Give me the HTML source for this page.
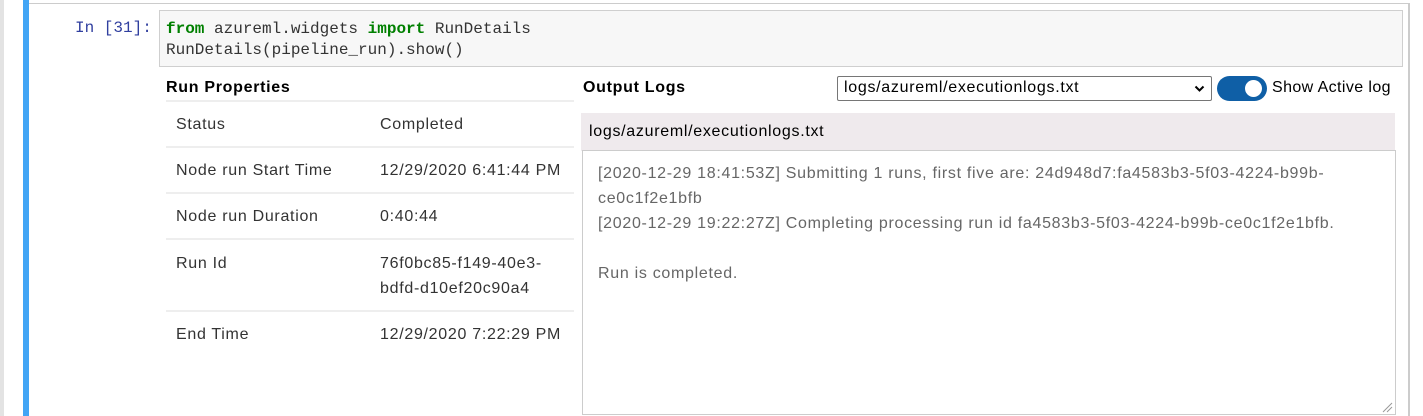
<!DOCTYPE html>
<html><head><style>
body{margin:0;width:1423px;height:416px;overflow:hidden;background:#fff;font-family:"Liberation Sans",Arial,sans-serif;position:relative;letter-spacing:0.7px}
.a{position:absolute;white-space:nowrap}
.mono{font-family:"Liberation Mono",monospace;font-size:16px;letter-spacing:0}
.lab{font-size:16px;color:#333}
.sep{position:absolute;left:166px;width:408px;height:2px;background:#eee}
.log{font-size:16px;color:#666}
</style></head><body>
<div class="a" style="left:0;top:0;width:4px;height:416px;background:#e3e3e3"></div>
<div class="a" style="left:23px;top:0;width:6px;height:416px;background:#42a5f5"></div>
<div class="a" style="left:29px;top:3px;width:1381px;height:413px;border-top:1px solid #ccc;border-right:2px solid #ccc;box-sizing:border-box"></div>
<div class="a mono" style="left:75px;top:19px;color:#303f9f">In [31]:</div>
<div class="a" style="left:159px;top:10px;width:1244px;height:57px;background:#f7f7f7;border:1px solid #cfcfcf;box-sizing:border-box"></div>
<div class="a mono" style="left:166px;top:19px;line-height:21px;color:#333"><span style="color:#008000;font-weight:bold">from</span> azureml.widgets <span style="color:#008000;font-weight:bold">import</span> RunDetails<br>RunDetails(pipeline_run).show()</div>

<div class="a" style="left:166px;top:79px;font-size:16px;font-weight:bold;color:#000">Run Properties</div>
<div class="sep" style="top:100px"></div>
<div class="a lab" style="left:176px;top:116px">Status</div><div class="a lab" style="left:380px;top:116px">Completed</div>
<div class="sep" style="top:146px"></div>
<div class="a lab" style="left:176px;top:162px">Node run Start Time</div><div class="a lab" style="left:380px;top:162px">12/29/2020 6:41:44 PM</div>
<div class="sep" style="top:192px"></div>
<div class="a lab" style="left:176px;top:208px">Node run Duration</div><div class="a lab" style="left:380px;top:208px">0:40:44</div>
<div class="sep" style="top:238px"></div>
<div class="a lab" style="left:176px;top:255px">Run Id</div><div class="a lab" style="left:380px;line-height:25px;top:251px">76f0bc85-f149-40e3-<br>bdfd-d10ef20c90a4</div>
<div class="sep" style="top:310px"></div>
<div class="a lab" style="left:176px;top:326px">End Time</div><div class="a lab" style="left:380px;top:326px">12/29/2020 7:22:29 PM</div>

<div class="a" style="left:583px;top:79px;font-size:16px;font-weight:bold;color:#000">Output Logs</div>
<div class="a" style="left:837px;top:76px;width:375px;height:25px;border:1px solid #767676;border-radius:2px;box-sizing:border-box;font-size:16px;color:#000;padding:2px 0 0 6px">logs/azureml/executionlogs.txt
<svg style="position:absolute;right:6px;top:8px" width="11" height="8" viewBox="0 0 11 8"><path d="M1.5 1.5L5.5 5.5L9.5 1.5" stroke="#000" stroke-width="2" fill="none"/></svg></div>
<div class="a" style="left:1217px;top:76px;width:50px;height:25px;border-radius:13px;background:#0f5fa6"></div>
<div class="a" style="left:1245px;top:80px;width:17px;height:17px;border-radius:50%;background:#fff"></div>
<div class="a" style="left:1272px;top:79px;font-size:16px;color:#000;letter-spacing:0.4px">Show Active log</div>

<div class="a" style="left:581px;top:113px;width:814px;height:38px;background:#efeaed"></div>
<div class="a" style="left:589px;top:123px;font-size:16px;color:#000">logs/azureml/executionlogs.txt</div>
<div class="a" style="left:582px;top:150px;width:814px;height:265px;border:1px solid #ccc;box-sizing:border-box;background:#fff"></div>
<div class="a log" style="left:598px;top:161px;line-height:25px">[2020-12-29 18:41:53Z] Submitting 1 runs, first five are: 24d948d7:fa4583b3-5f03-4224-b99b-<br>ce0c1f2e1bfb<br>[2020-12-29 19:22:27Z] Completing processing run id fa4583b3-5f03-4224-b99b-ce0c1f2e1bfb.<br><br>Run is completed.</div>
<svg class="a" style="left:1382px;top:402px" width="11" height="11"><path d="M1 10L10 1M5 10L10 5" stroke="#999" stroke-width="1"/></svg>
</body></html>
